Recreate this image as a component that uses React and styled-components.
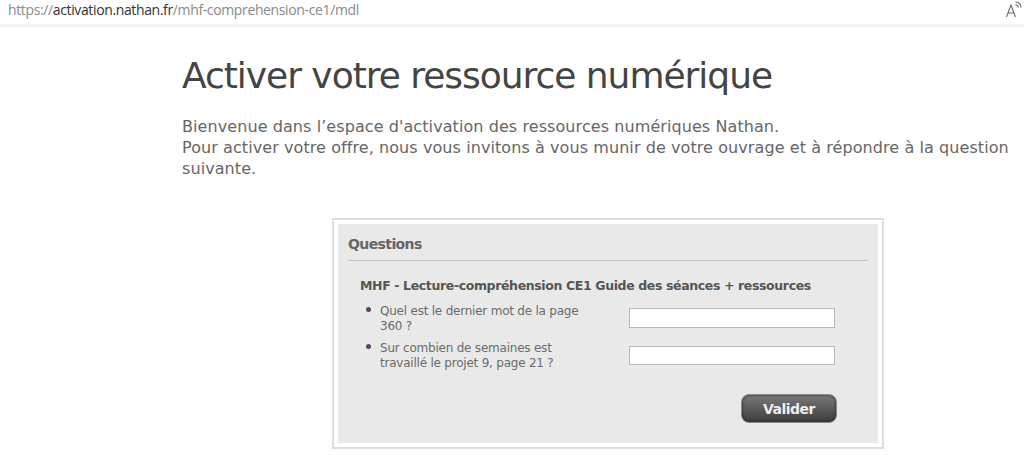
import React from "react";
import styled, { createGlobalStyle } from "styled-components";

const Global = createGlobalStyle`
  html, body {
    margin: 0;
    padding: 0;
    background: #fff;
    font-family: "DejaVu Sans", "Liberation Sans", sans-serif;
  }
`;

const Page = styled.div`
  width: 1024px;
  height: 455px;
  overflow: hidden;
`;

const AddressBar = styled.div`
  height: 27px;
  box-sizing: border-box;
  background: #fff;
  border-bottom: 3px solid #f1f1f1;
  display: flex;
  align-items: center;
  justify-content: space-between;
  padding: 0 2px 6px 8px;
  font-family: "Open Sans", sans-serif;
  font-size: 14px;
  letter-spacing: -0.37px;
  color: #8a8a8a;
`;

const Domain = styled.span`
  color: #333;
`;

const ReadAloud = styled.svg`
  width: 16px;
  height: 16px;
`;

const Content = styled.main`
  padding: 26px 10px 0 182px;
`;

const Title = styled.h1`
  margin: 0;
  font-size: 36px;
  line-height: 46px;
  font-weight: 400;
  letter-spacing: -1.03px;
  color: #444;
`;

const Intro = styled.p`
  margin: 17px 0 0;
  font-size: 16px;
  line-height: 21px;
  letter-spacing: 0.08px;
  color: #666;
`;

const Frame = styled.div`
  margin: 39px 0 0 150px;
  width: 552px;
  box-sizing: border-box;
  border: 2px solid #dedede;
  padding: 4px;
`;

const Panel = styled.form`
  background: #e9e9e9;
  padding: 10px 10px 20px;
`;

const PanelTitle = styled.h2`
  margin: 0;
  padding-bottom: 6px;
  font-size: 14px;
  line-height: 20px;
  font-weight: 700;
  letter-spacing: -0.6px;
  color: #666;
  border-bottom: 1px solid #c4c4c4;
`;

const Guide = styled.h3`
  margin: 16px 0 0 12px;
  font-size: 12.5px;
  line-height: 18px;
  font-weight: 700;
  letter-spacing: -0.37px;
  color: #555;
`;

const Question = styled.div`
  display: flex;
  justify-content: space-between;
  margin: ${(p) => p.$top}px 33px 0 32px;
`;

const Label = styled.label`
  width: 208px;
  position: relative;
  padding-top: ${(p) => p.$nudge}px;
  font-size: 12px;
  line-height: 15px;
  letter-spacing: -0.22px;
  color: #6b6b6b;

  &::before {
    content: "";
    position: absolute;
    left: -14px;
    top: ${(p) => p.$nudge + 3}px;
    width: 5px;
    height: 5px;
    border-radius: 50%;
    background: #5f3f66;
  }
`;

const Field = styled.input`
  width: 206px;
  height: ${(p) => p.$height}px;
  box-sizing: border-box;
  margin-top: 5px;
  background: #fff;
  border: 1px solid #b9b9b9;
`;

const Actions = styled.div`
  display: flex;
  justify-content: flex-end;
  margin: 23px 31px 0 0;
`;

const Submit = styled.button`
  width: 96px;
  height: 29px;
  border: 1px solid #8a8a8a;
  border-radius: 8px;
  background: linear-gradient(#7a7a7a, #3c3c3c);
  box-shadow: inset 0 0 3px #222;
  color: #eee;
  font-family: inherit;
  font-size: 14px;
  font-weight: 700;
  letter-spacing: -0.5px;
  padding: 0;
`;

export default function App() {
  return (
    <Page>
      <Global />
      <AddressBar>
        <span>
          https://<Domain>activation.nathan.fr</Domain>/mhf-comprehension-ce1/mdl
        </span>
        <ReadAloud viewBox="0 0 16 16" fill="none" stroke="#666" strokeWidth="1.1">
          <path d="M0.5 16 5 4 9.5 16M2.2 12h5.6" />
          <path d="M9.5 1a6 6 0 0 1 5.5 5.5M9.5 3.5a3.5 3.5 0 0 1 3 3" />
        </ReadAloud>
      </AddressBar>
      <Content>
        <Title>Activer votre ressource numérique</Title>
        <Intro>
          Bienvenue dans l’espace d'activation des ressources numériques Nathan.
          <br />
          Pour activer votre offre, nous vous invitons à vous munir de votre ouvrage et à répondre à la question suivante.
        </Intro>
        <Frame>
          <Panel>
            <PanelTitle>Questions</PanelTitle>
            <Guide>MHF - Lecture-compréhension CE1 Guide des séances + ressources</Guide>
            <Question $top={8}>
              <Label $nudge={1}>Quel est le dernier mot de la page 360 ?</Label>
              <Field type="text" $height={20} />
            </Question>
            <Question $top={7}>
              <Label $nudge={0}>Sur combien de semaines est travaillé le projet 9, page 21 ?</Label>
              <Field type="text" $height={19} />
            </Question>
            <Actions>
              <Submit type="button">Valider</Submit>
            </Actions>
          </Panel>
        </Frame>
      </Content>
    </Page>
  );
}
